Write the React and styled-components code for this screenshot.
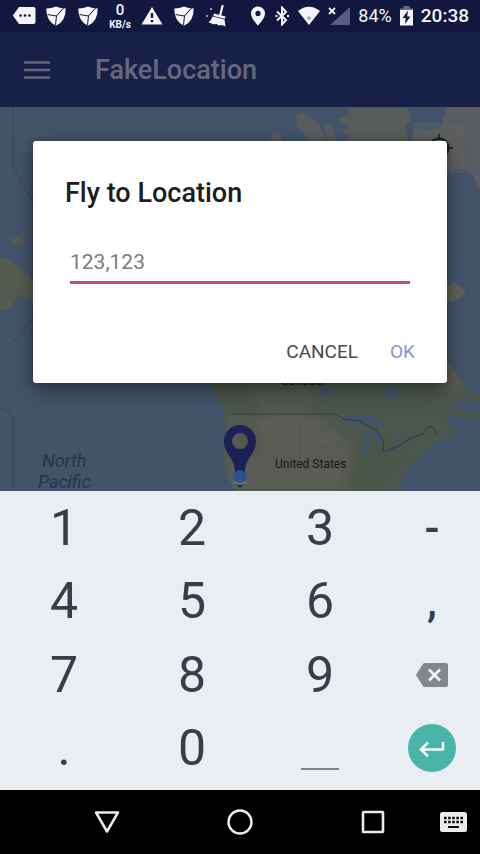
import React from 'react'
import styled, { createGlobalStyle, css } from 'styled-components'

const GlobalStyle = createGlobalStyle`
  * {
    box-sizing: border-box;
  }
  body {
    margin: 0;
    background: #000;
    font-family: Roboto, 'Liberation Sans', sans-serif;
  }
  button,
  input {
    font-family: inherit;
  }
`

const Screen = styled.div`
  display: flex;
  flex-direction: column;
  min-height: 100vh;
`

const StatusBar = styled.header`
  display: flex;
  align-items: center;
  justify-content: space-between;
  height: 32px;
  padding: 0 11px 0 8px;
  background: #121740;
  color: #f4f5fa;
`

const Notifications = styled.div`
  display: flex;
  align-items: center;
`

const Slot = styled.div`
  display: flex;
  flex-direction: column;
  align-items: center;
  width: 32px;
`

const SpeedValue = styled.span`
  font-size: 15px;
  font-weight: 500;
  line-height: 17px;
`

const SpeedUnit = styled.span`
  font-size: 10px;
  font-weight: 700;
  line-height: 12px;
`

const SystemIcons = styled.div`
  display: flex;
  align-items: center;
  gap: 8px;
`

const StatusText = styled.span`
  font-size: 18px;
  line-height: 24px;
  ${props =>
    props.$strong &&
    css`
      font-size: 19px;
      font-weight: 500;
    `}
`

const AppArea = styled.div`
  position: relative;
  display: flex;
  flex: 1;
  flex-direction: column;
`

const AppBar = styled.div`
  display: flex;
  align-items: center;
  gap: 41px;
  height: 75px;
  padding: 0 20px;
  background: #192048;
  color: #66697c;
`

const MenuButton = styled.button`
  display: flex;
  padding: 4px;
  border: 0;
  background: none;
  color: inherit;
`

const AppTitle = styled.h1`
  margin: 0;
  font-size: 27px;
  font-weight: 500;
  line-height: 32px;
`

const MapView = styled.main`
  position: relative;
  flex: 1;
  min-height: 384px;
  overflow: hidden;
  background: #435369;
`

const MapDrawing = styled.svg`
  position: absolute;
  inset: 0;
  width: 100%;
  height: 100%;
`

const MapLabel = styled.span`
  position: absolute;
  top: ${props => props.$top}px;
  left: ${props => props.$left}px;
  font-size: 12px;
  line-height: 16px;
  text-align: center;
  color: #15171a;
  ${props =>
    props.$water &&
    css`
      font-size: 18px;
      font-style: italic;
      line-height: 21px;
      color: #27344f;
    `}
`

const LocateButton = styled.button`
  position: absolute;
  top: 16px;
  right: 16px;
  display: flex;
  align-items: center;
  justify-content: center;
  width: 50px;
  height: 50px;
  padding: 0;
  border: 0;
  background: rgba(100, 100, 100, 0.4);
  color: #1d1f21;
`

const Marker = styled.svg`
  position: absolute;
  top: 317px;
  left: 223px;
`

const Overlay = styled.div`
  position: absolute;
  inset: 0;
  display: flex;
  align-items: center;
  justify-content: center;
  padding: 0 33px;
`

const Dialog = styled.form`
  width: 100%;
  padding: 36px 32px 15px;
  border-radius: 3px;
  background: #fff;
  box-shadow: 0 8px 20px rgba(0, 0, 0, 0.35), 0 0 6px rgba(0, 0, 0, 0.25);
`

const DialogTitle = styled.h2`
  margin: 0 0 32px;
  font-size: 27px;
  font-weight: 500;
  line-height: 32px;
  color: #1d1d1f;
`

const Field = styled.div`
  display: flex;
  padding: 0 5px;
`

const LocationInput = styled.input`
  width: 100%;
  height: 43px;
  padding: 2px 0 0;
  border: 0;
  border-bottom: 3px solid #c94c80;
  border-radius: 0;
  outline: 0;
  background: none;
  font-size: 21px;
  color: #222;
  &::placeholder {
    color: #7c7c7c;
    opacity: 1;
  }
`

const Actions = styled.div`
  display: flex;
  justify-content: flex-end;
  gap: 32px;
  margin-top: 52px;
`

const ActionButton = styled.button`
  padding: 0;
  border: 0;
  background: none;
  font-size: 19px;
  line-height: 32px;
  text-transform: uppercase;
  color: ${props => (props.$primary ? '#7f98d2' : '#4a4a4c')};
`

const Keypad = styled.div`
  display: grid;
  grid-template-columns: 4fr 4fr 4fr 3fr;
  grid-template-rows: repeat(4, 1fr);
  height: 299px;
  padding: 0 0 5px;
  background: #e9eef2;
`

const Key = styled.button`
  display: flex;
  align-items: center;
  justify-content: center;
  padding: 0;
  border: 0;
  background: none;
  font-size: 50px;
  line-height: 60px;
  color: #363f47;
  ${props =>
    props.$small &&
    css`
      font-size: 44px;
      font-weight: 500;
    `}
`

const SpaceMark = styled.span`
  width: 38px;
  height: 2px;
  margin-top: 42px;
  background: #7b8389;
`

const EnterMark = styled.span`
  display: flex;
  align-items: center;
  justify-content: center;
  width: 48px;
  height: 48px;
  border-radius: 50%;
  background: #49b4a7;
`

const NavBar = styled.nav`
  display: grid;
  grid-template-columns: 40px 1fr 1fr 1fr 40px;
  align-items: center;
  height: 64px;
  background: #000;
  color: #ececec;
`

const NavButton = styled.button`
  display: flex;
  justify-self: ${props => (props.$start ? 'start' : 'center')};
  padding: 0;
  border: 0;
  background: none;
  color: inherit;
  ${props =>
    props.$first &&
    css`
      grid-column: 2;
    `}
`

const MessageIcon = () => (
  <svg width="24" height="20" viewBox="0 0 24 20" aria-hidden="true">
    <path d="M7 1h14.500q2 0 2 2v13q0 2-2 2H7L.8 9.500z" fill="currentColor" />
    <g fill="#121740">
      <circle cx="8.500" cy="9.500" r="1.300" />
      <circle cx="13" cy="9.500" r="1.300" />
      <circle cx="17.500" cy="9.500" r="1.300" />
    </g>
  </svg>
)

const ShieldIcon = () => (
  <svg width="20" height="20" viewBox="0 0 20 20" aria-hidden="true">
    <path
      d="M.3 2.500Q5.500 2.400 10 .5q4.500 1.900 9.700 2 .2 6-2.200 10.500-2.500 4.500-7.500 6.700-5-2.200-7.500-6.700Q.1 8.500.3 2.500z"
      fill="currentColor"
    />
    <path d="M1.500 8.500l9 1.500L17.500 2M10.500 10l-1 9" fill="none" stroke="#121740" strokeWidth="1" />
  </svg>
)

const WarningIcon = () => (
  <svg width="22" height="20" viewBox="0 0 22 20" aria-hidden="true">
    <path d="M11 1l10.500 17.500H.5z" fill="currentColor" />
    <path d="M11 7v5M11 14v2.200" stroke="#121740" strokeWidth="2.400" />
  </svg>
)

const BroomIcon = () => (
  <svg width="22" height="22" viewBox="0 0 22 22" aria-hidden="true">
    <path d="M17.500 1l-2.500 10" stroke="currentColor" strokeWidth="2.200" strokeLinecap="round" />
    <path d="M9 8.500l11.500 3-.6 2.300L8.300 11z" fill="currentColor" />
    <path d="M7.500 11.500l12 3 1 7-3.500-1.500-3 .5-2.500-1.500-3 .2-5-2q3-2 4-5.700z" fill="currentColor" />
    <g fill="#8d92b8">
      <circle cx="2" cy="11" r="1.200" />
      <circle cx="6" cy="4" r="1.200" />
    </g>
  </svg>
)

const PlaceIcon = () => (
  <svg width="16" height="20" viewBox="0 0 16 20" aria-hidden="true">
    <path
      d="M8 .5a7 7 0 0 0-7 7c0 5 7 12 7 12s7-7 7-12a7 7 0 0 0-7-7zm0 4.300a2.600 2.600 0 1 1 0 5.200 2.600 2.600 0 0 1 0-5.200z"
      fill="currentColor"
      fillRule="evenodd"
    />
  </svg>
)

const BluetoothIcon = () => (
  <svg width="16" height="20" viewBox="0 0 16 20" fill="none" stroke="currentColor" aria-hidden="true">
    <path d="M3 5.500l9 8.500-4 4.500V1.500L12 6l-9 8.500" strokeWidth="2" />
    <path d="M1.500 10h2M13 10h2" strokeWidth="2" />
  </svg>
)

const WifiIcon = () => (
  <svg width="22" height="20" viewBox="0 0 22 20" aria-hidden="true">
    <path d="M0 5Q11-3.500 22 5L11 19z" fill="currentColor" />
    <path d="M8.500 11.500q2.500-1.800 5 0L11 14.500z" fill="#a3a6bb" />
  </svg>
)

const SignalIcon = () => (
  <svg width="22" height="20" viewBox="0 0 22 20" aria-hidden="true">
    <path d="M22 1v18H2z" fill="#595d81" />
    <path d="M1 2l6 6M7 2L1 8" stroke="currentColor" strokeWidth="1.800" />
  </svg>
)

const BatteryIcon = () => (
  <svg width="13" height="20" viewBox="0 0 13 20" aria-hidden="true">
    <path d="M3.500 0h6v2.500H13V4H0V2.500h3.500z" fill="#696c8b" />
    <path d="M0 4h13v15.500H0z" fill="currentColor" />
    <path d="M8 4.500L2.500 12h3.200L5 18l5.500-7.500H7.200z" fill="#121740" />
  </svg>
)

const MenuIcon = () => (
  <svg width="26" height="20" viewBox="0 0 26 20" aria-hidden="true">
    <path d="M0 2.500h26M0 10h26M0 17.500h26" stroke="currentColor" strokeWidth="2.600" />
  </svg>
)

const BackspaceIcon = () => (
  <svg width="32" height="24" viewBox="0 0 32 24" aria-hidden="true">
    <path d="M9 0h21q2 0 2 2v20q0 2-2 2H9q-1.300 0-2-1L.5 13q-.7-1 0-2L7 1q.7-1 2-1z" fill="#80888e" />
    <path d="M13 6.500l11 11M24 6.500l-11 11" stroke="#f2f5f7" strokeWidth="2.600" />
  </svg>
)

const EnterIcon = () => (
  <svg width="26" height="18" viewBox="0 0 26 18" fill="none" stroke="#f1fbf9" aria-hidden="true">
    <path d="M24 3v7.500H2.500M9 3.500l-7 7 7 7" strokeWidth="2.600" />
  </svg>
)

const BackIcon = () => (
  <svg width="26" height="24" viewBox="0 0 26 24" fill="none" stroke="currentColor" aria-hidden="true">
    <path d="M2 2.500h22L13 21.500z" strokeWidth="2.500" strokeLinejoin="round" />
  </svg>
)

const HomeIcon = () => (
  <svg width="26" height="26" viewBox="0 0 26 26" fill="none" stroke="currentColor" aria-hidden="true">
    <circle cx="13" cy="13" r="11.500" strokeWidth="2.400" />
  </svg>
)

const RecentsIcon = () => (
  <svg width="24" height="24" viewBox="0 0 24 24" fill="none" stroke="currentColor" aria-hidden="true">
    <rect x="2" y="2" width="20" height="20" rx="0.500" strokeWidth="2.600" />
  </svg>
)

const KeyboardIcon = () => (
  <svg width="27" height="20" viewBox="0 0 27 20" aria-hidden="true">
    <rect width="27" height="20" rx="2.500" fill="currentColor" />
    <path d="M4 6h19M4 10h19" stroke="#111" strokeWidth="2.400" strokeDasharray="2.600 1.500" />
    <path d="M8 15h11" stroke="#111" strokeWidth="2" />
  </svg>
)

const LocateIcon = () => (
  <svg width="30" height="30" viewBox="0 0 30 30" fill="none" stroke="currentColor" aria-hidden="true">
    <circle cx="15" cy="15" r="9.500" strokeWidth="2.200" />
    <path d="M15 1v6M15 23v6M1 15h6M23 15h6" strokeWidth="1.500" />
  </svg>
)

const WorldMap = () => (
  <MapDrawing viewBox="0 0 480 384" preserveAspectRatio="xMidYMid slice" aria-hidden="true">
    <defs>
      <filter id="terrain" x="-5%" y="-5%" width="110%" height="110%">
        <feGaussianBlur stdDeviation="5" />
      </filter>
      <clipPath id="mainland">
        <path d="M205 262l8 18 9 18 4 20-1 20-3 16 6 16 8 16h173l6-20 12-16 14-14 16-9 10-8 23-12v-14l-14-6-14-12-16-24-26-20H205z" />
      </clipPath>
    </defs>
    {/* asia */}
    <g fill="#555b51">
      <path d="M0 149l8 3 10 8 12 10 8 12-2 14-11-6-6-2-5 8-6 5H0z" />
      <path d="M0 180l8 4 5 12-3 7H0z" />
      <path d="M9 132l9-4 6 6-3 4h-9z" />
    </g>
    {/* arctic islands */}
    <g fill="#565c5b">
      <path d="M262 36l8-3 4-8 7 3 1 8zM296 7l7-2 9 8 6 2 6 14 4 12h-17l-6-14-8-6z" />
      <path d="M324 20l4-4 6 5 2 15h-8zM338 12l12-4-2-8h60l4 12-6 6 2 16-8 8h-28l-6-10-8 8-10-4 1-8-8-4 8-4z" />
      <path d="M412 22l18 2 12-4 12-6v50h-44z" />
    </g>
    <path d="M447 0h33v84l-7-16-10-6-20-1V12z" fill="#595c60" />
    <path d="M446 180l8-5 12 9-5 7-10 4-5-3z" fill="#5d6058" />
    <g clipPath="url(#mainland)">
      <rect x="190" y="190" width="290" height="194" fill="#4b574e" />
      <g filter="url(#terrain)">
        <path d="M230 300h62l24 12 18 10 20 18 6 44H226z" fill="#5a5b54" />
        <path d="M205 262h40l18 30-4 18-30-3-12-18z" fill="#485546" />
        <path d="M248 274h58l10 14-20 16-36 4z" fill="#4f5950" />
        <path d="M360 322l28 6 20 18-30 38h-32z" fill="#4a5649" />
        <path d="M426 246l24 0 20 22-16 16-24-10z" fill="#5a5c51" />
        <path d="M240 308l14 12 4 22-10 12-10-16z" fill="#4e584a" />
      </g>
      <g fill="#435369">
        <path d="M386 282l8-3 5 5-3 8-9 0-2-5zM318 279l8-2 3 10-8 3z" />
        <path d="M344 310l16-3 18 4 6 8-16-3-14 2zM366 324l4-2 0 14-4 12-4-4zM372 322l9 3 3 10-7 2zM384 343l14-6 6-3-1 4-16 9z" />
        <path d="M480 314l-26-6-10 5 12 10-2 6-22 8-6 9-20 16-6 22h90z" />
        <path d="M452 297l14-4 14 3v8h-16z" />
      </g>
    </g>
    <path
      d="M230 307h105l9 5 16 2 16 9 8 12-1 10 14-5 12-8 14-5 6-8 5 2 3 9"
      fill="none"
      stroke="#343c3f"
      strokeWidth="1"
    />
    <path
      d="M256 307v77M278 307v77M300 307v48M256 330h66M270 350h70M314 340h40M342 334v50"
      fill="none"
      stroke="#565951"
      strokeWidth="1"
    />
    <path
      d="M13 0v60l20 34M33 212L0 250M0 300l13 9v75"
      fill="none"
      stroke="#3f3d5c"
      strokeWidth="1"
      strokeDasharray="6 2"
    />
  </MapDrawing>
)

const MapMarker = () => (
  <Marker width="34" height="64" viewBox="0 0 34 64" aria-hidden="true">
    <path d="M12 59h10l-5 5z" fill="#1d2c62" />
    <circle cx="17" cy="52" r="6.500" fill="#2b5290" />
    <path d="M11 58q6 4 12 0" fill="none" stroke="#71839b" strokeWidth="1.500" />
    <path
      d="M17 1A16 16 0 0 0 1 17c0 13 11 17 11 31q5-4 10 0c0-14 11-18 11-31A16 16 0 0 0 17 1zm0 8a8 8 0 1 1 0 16 8 8 0 0 1 0-16z"
      fill="#1b2057"
      fillRule="evenodd"
    />
  </Marker>
)

const keys = ['1', '2', '3', '-', '4', '5', '6', ',', '7', '8', '9', 'backspace', '.', '0', 'space', 'enter']

const keyFaces = {
  backspace: <BackspaceIcon />,
  space: <SpaceMark />,
  enter: (
    <EnterMark>
      <EnterIcon />
    </EnterMark>
  ),
}

const App = () => (
  <>
    <GlobalStyle />
    <Screen>
      <StatusBar>
        <Notifications>
          <Slot>
            <MessageIcon />
          </Slot>
          <Slot>
            <ShieldIcon />
          </Slot>
          <Slot>
            <ShieldIcon />
          </Slot>
          <Slot>
            <SpeedValue>0</SpeedValue>
            <SpeedUnit>KB/s</SpeedUnit>
          </Slot>
          <Slot>
            <WarningIcon />
          </Slot>
          <Slot>
            <ShieldIcon />
          </Slot>
          <Slot>
            <BroomIcon />
          </Slot>
        </Notifications>
        <SystemIcons>
          <PlaceIcon />
          <BluetoothIcon />
          <WifiIcon />
          <SignalIcon />
          <StatusText>84%</StatusText>
          <BatteryIcon />
          <StatusText $strong>20:38</StatusText>
        </SystemIcons>
      </StatusBar>
      <AppArea>
        <AppBar>
          <MenuButton type="button" aria-label="Menu">
            <MenuIcon />
          </MenuButton>
          <AppTitle>FakeLocation</AppTitle>
        </AppBar>
        <MapView>
          <WorldMap />
          <MapLabel $top={343} $left={38} $water>
            North
            <br />
            Pacific
          </MapLabel>
          <MapLabel $top={266} $left={281}>
            Canada
          </MapLabel>
          <MapLabel $top={349} $left={275}>
            United States
          </MapLabel>
          <MapMarker />
          <LocateButton type="button" aria-label="My location">
            <LocateIcon />
          </LocateButton>
        </MapView>
        <Overlay>
          <Dialog role="dialog" aria-labelledby="fly-title" onSubmit={e => e.preventDefault()}>
            <DialogTitle id="fly-title">Fly to Location</DialogTitle>
            <Field>
              <LocationInput type="text" inputMode="decimal" placeholder="123,123" aria-labelledby="fly-title" />
            </Field>
            <Actions>
              <ActionButton type="button">Cancel</ActionButton>
              <ActionButton type="submit" $primary>
                OK
              </ActionButton>
            </Actions>
          </Dialog>
        </Overlay>
      </AppArea>
      <Keypad>
        {keys.map(key => (
          <Key key={key} type="button" $small={key === '-' || key === ','} aria-label={key}>
            {keyFaces[key] || key}
          </Key>
        ))}
      </Keypad>
      <NavBar>
        <NavButton type="button" aria-label="Back" $first>
          <BackIcon />
        </NavButton>
        <NavButton type="button" aria-label="Home">
          <HomeIcon />
        </NavButton>
        <NavButton type="button" aria-label="Recent apps">
          <RecentsIcon />
        </NavButton>
        <NavButton type="button" aria-label="Switch keyboard" $start>
          <KeyboardIcon />
        </NavButton>
      </NavBar>
    </Screen>
  </>
)

export default App
